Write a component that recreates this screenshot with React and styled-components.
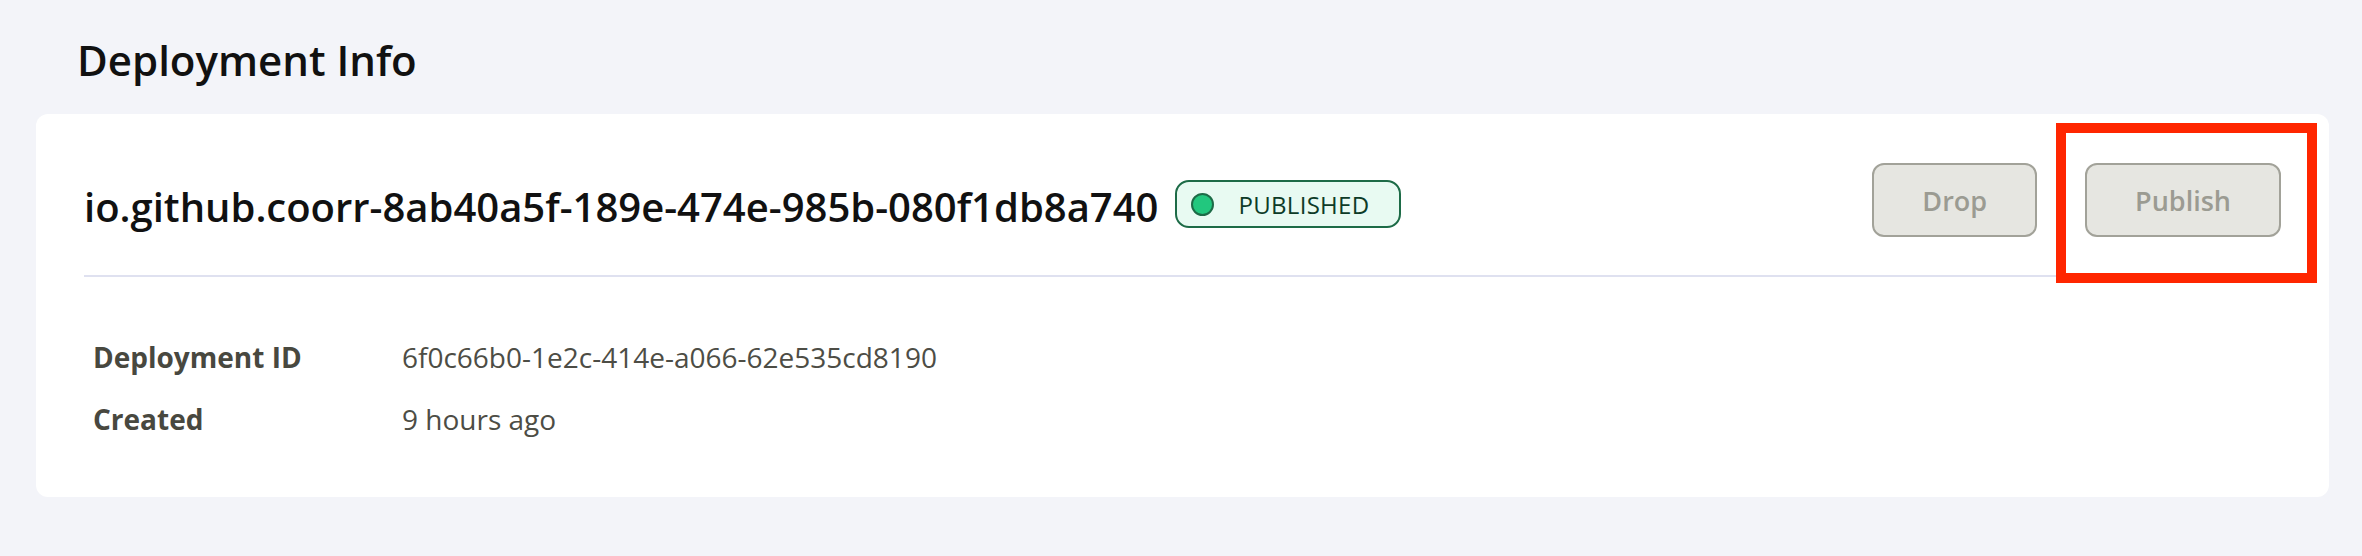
import React from "react";
import styled, { createGlobalStyle } from "styled-components";

const GlobalStyle = createGlobalStyle`
  body {
    margin: 0;
    background: #f3f4f9;
    font-family: "Open Sans", "Noto Sans", sans-serif;
  }
`;

const Page = styled.div`
  padding: 31px 33px 59px 36px;
`;

const PageTitle = styled.h1`
  margin: 0 0 26px 41px;
  font-size: 42px;
  font-weight: 600;
  line-height: normal;
  color: #111111;
`;

const Card = styled.section`
  background: #ffffff;
  border-radius: 12px;
  padding: 49px 48px 47px;
`;

const Header = styled.div`
  display: flex;
  align-items: center;
  justify-content: space-between;
  padding-bottom: 38px;
  border-bottom: 2px solid #dfe1f0;
`;

const NameGroup = styled.div`
  display: flex;
  align-items: center;
  gap: 17px;
  margin-top: 12px;
`;

const Name = styled.h2`
  margin: 0;
  font-size: 40px;
  font-weight: 600;
  line-height: normal;
  color: #111111;
`;

const Badge = styled.span`
  display: inline-flex;
  align-items: center;
  gap: 24px;
  height: 48px;
  box-sizing: border-box;
  padding: 0 30px 0 14px;
  border: 2px solid #1d6b47;
  border-radius: 14px;
  background: #e8faf2;
  color: #0d3b27;
  font-size: 24px;
  letter-spacing: 0.3px;
  margin-top: -4px;
`;

const Dot = styled.span`
  width: 23px;
  height: 23px;
  box-sizing: border-box;
  border-radius: 50%;
  border: 2px solid #1d6b47;
  background: #22c77e;
`;

const Actions = styled.div`
  display: flex;
  gap: 48px;
`;

const ActionButton = styled.button`
  height: 74px;
  padding: 0 48px;
  border: 2px solid #a2a299;
  border-radius: 12px;
  background: #e6e6e1;
  color: #9b9b92;
  font-family: inherit;
  font-size: 27px;
  font-weight: 600;
  cursor: not-allowed;
`;

const Highlighted = styled.div`
  position: relative;
`;

const HighlightBox = styled.div`
  position: absolute;
  top: -40px;
  left: -29px;
  right: -36px;
  bottom: -46px;
  border: 10px solid #ff2600;
  pointer-events: none;
`;

const Details = styled.dl`
  display: grid;
  grid-template-columns: 309px 1fr;
  grid-auto-rows: 62px;
  align-items: center;
  margin: 0;
  padding: 49px 0 0 9px;
  font-size: 28px;
`;

const Label = styled.dt`
  font-weight: 700;
  color: #48483f;
`;

const Value = styled.dd`
  margin: 0;
  color: #4d4d45;
`;

export default function App() {
  const details = [
    { label: "Deployment ID", value: "6f0c66b0-1e2c-414e-a066-62e535cd8190" },
    { label: "Created", value: "9 hours ago" },
  ];

  return (
    <Page>
      <GlobalStyle />
      <PageTitle>Deployment Info</PageTitle>
      <Card>
        <Header>
          <NameGroup>
            <Name>io.github.coorr-8ab40a5f-189e-474e-985b-080f1db8a740</Name>
            <Badge>
              <Dot />
              PUBLISHED
            </Badge>
          </NameGroup>
          <Actions>
            <ActionButton disabled>Drop</ActionButton>
            <Highlighted>
              <ActionButton disabled>Publish</ActionButton>
              <HighlightBox />
            </Highlighted>
          </Actions>
        </Header>
        <Details>
          {details.map((item) => (
            <React.Fragment key={item.label}>
              <Label>{item.label}</Label>
              <Value>{item.value}</Value>
            </React.Fragment>
          ))}
        </Details>
      </Card>
    </Page>
  );
}
